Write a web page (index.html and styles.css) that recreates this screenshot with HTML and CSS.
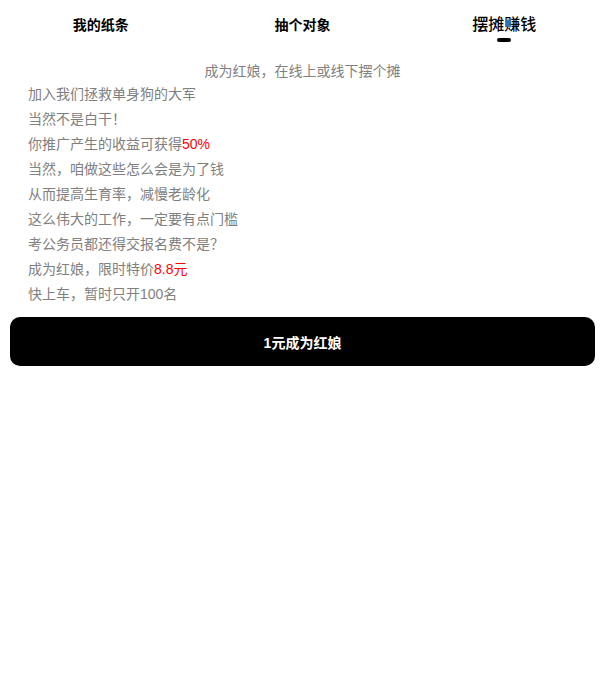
FILE: index.html
```html
<!DOCTYPE html>
<html lang="zh">
<head>
<meta charset="utf-8">
<link rel="stylesheet" href="styles.css">
</head>
<body>
<div class="tabs">
  <div class="tab">我的纸条</div>
  <div class="tab">抽个对象</div>
  <div class="tab active">摆摊赚钱<span class="bar"></span></div>
</div>
<div class="page">
  <p class="subtitle">成为红娘，在线上或线下摆个摊</p>
  <div class="lines">
    <p>加入我们拯救单身狗的大军</p>
    <p>当然不是白干！</p>
    <p>你推广产生的收益可获得<span class="red">50%</span></p>
    <p>当然，咱做这些怎么会是为了钱</p>
    <p>从而提高生育率，减慢老龄化</p>
    <p>这么伟大的工作，一定要有点门槛</p>
    <p>考公务员都还得交报名费不是？</p>
    <p>成为红娘，限时特价<span class="red">8.8元</span></p>
    <p>快上车，暂时只开100名</p>
  </div>
  <button class="cta">1元成为红娘</button>
</div>
</body>
</html>
```
FILE: styles.css
```css
html, body {
  margin: 0;
  padding: 0;
  background: #fff;
  font-family: "Liberation Sans", Arial, "Noto Sans CJK SC", sans-serif;
}
.tabs {
  display: grid;
  grid-template-columns: 1fr 1fr 1fr;
  height: 50px;
}
.tab {
  display: flex;
  flex-direction: column;
  align-items: center;
  padding-top: 16px;
  font-size: 14px;
  font-weight: bold;
  color: #000;
  line-height: 18px;
}
.tab.active {
  font-size: 16px;
  font-weight: 500;
  padding-top: 15px;
  line-height: 20px;
}
.bar {
  display: block;
  width: 14px;
  height: 4px;
  border-radius: 2px;
  background: #000;
  margin-top: 3px;
}
.page {
  padding: 0 10px;
}
.subtitle {
  margin: 12px 0 0;
  text-align: center;
  font-size: 14px;
  color: #808080;
  line-height: 18px;
}
.lines {
  padding: 0 18px;
  margin-top: 2px;
}
.lines p {
  margin: 0;
  font-size: 14px;
  line-height: 25px;
  color: #808080;
}
.red {
  color: #ff0000;
}
.cta {
  display: block;
  width: 100%;
  height: 49px;
  margin-top: 10px;
  border: none;
  border-radius: 10px;
  background: #000;
  color: #fff;
  font-family: inherit;
  font-size: 14px;
  font-weight: bold;
}
```
